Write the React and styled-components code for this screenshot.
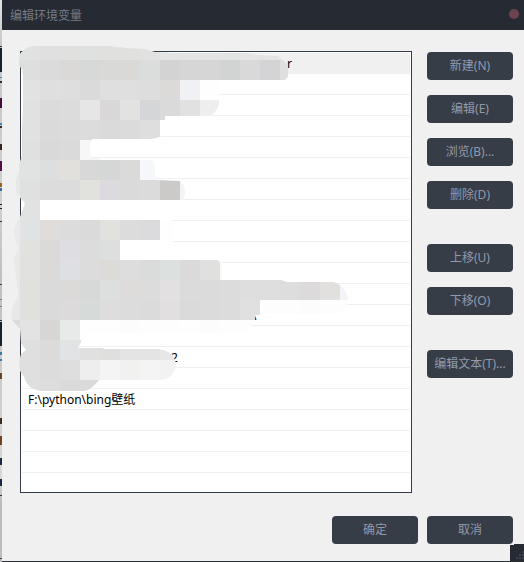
import React from "react";
import styled, { createGlobalStyle } from "styled-components";

const GlobalStyle = createGlobalStyle`
  * { box-sizing: border-box; }
  body { margin: 0; background: #c6c6c6; font-family: "Noto Sans", "Noto Sans CJK SC", sans-serif; font-size: 12px; }
`;

const Desktop = styled.div`
  display: flex;
  min-height: 100vh;
`;

const WindowEdge = styled.div`
  flex: 0 0 2px;
  background: ${(p) => p.$paint};
`;

const Dialog = styled.main`
  position: relative;
  flex: 1;
  min-width: 0;
  display: flex;
  flex-direction: column;
  background: #f0f0f0;
  border-bottom: 1px solid #2b2f34;
`;

const TitleBar = styled.header`
  display: flex;
  align-items: center;
  justify-content: space-between;
  height: 30px;
  padding: 2px 5px 0 8px;
  background: #262a33;
`;

const Title = styled.h1`
  margin: 0;
  font-size: 12px;
  line-height: 20px;
  font-weight: 400;
  color: #777b82;
`;

const CloseButton = styled.button`
  width: 10px;
  height: 10px;
  margin-bottom: 4px;
  padding: 0;
  border: 0;
  border-radius: 50%;
  background: #6c4450;
`;

const Content = styled.div`
  display: grid;
  grid-template-columns: minmax(0, 1fr) 86px;
  column-gap: 15px;
  padding: 21px 11px 0 18px;
`;

const ListArea = styled.div`
  position: relative;
`;

const PathList = styled.ul`
  margin: 0;
  padding: 1px;
  list-style: none;
  background: #fff;
  border: 1px solid #343c48;
`;

const PathRow = styled.li`
  height: 21px;
  padding-left: ${(p) => p.$indent || 6}px;
  line-height: 22px;
  white-space: pre;
  color: #000;
  background: ${(p) => (p.$selected ? "#f0f0f0" : "#fff")};
  border-bottom: 1px solid #f0f0f0;
  &:last-child { height: 18px; border-bottom: 0; }
`;

const Mosaic = styled.svg`
  position: absolute;
  left: -10px;
  top: -11px;
  pointer-events: none;
`;

const Actions = styled.div`
  display: flex;
  flex-direction: column;
  gap: 35px;
  padding-top: 1px;
`;

const ActionGroup = styled.div`
  display: flex;
  flex-direction: column;
  gap: 15px;
`;

const Button = styled.button`
  width: 86px;
  height: 28px;
  padding: 0;
  border: 0;
  border-radius: 4px;
  background: #363d47;
  color: #9299ab;
  font: inherit;
  line-height: 20px;
  white-space: nowrap;
`;

const Footer = styled.footer`
  display: flex;
  justify-content: flex-end;
  gap: 9px;
  padding: 23px 11px 17px;
`;

const Grip = styled.svg`
  position: absolute;
  right: 0;
  bottom: 0;
`;

const rows = Array.from({ length: 21 }, () => ({ text: "" }));
rows[0] = { text: "r", indent: 265, selected: true };
rows[12] = { text: "\\", indent: 230 };
rows[14] = { text: "2", indent: 149 };
rows[16] = { text: "F:\\python\\bing壁纸" };

// [top, colours of successive 20px cells starting at x = 0]
const cells = [
  [40, "e4e5e4 dfe2e1 dfe0df e0e0df dfe1e0 e0e1df e0e1df e1e1e1 e4e4e6 e4e4e4 e4e4e4 e2e3e3 e4e4e4 e4e4e5 e6e6e6"],
  [60, "dcdfde dcdfde dadbda dad9d7 d6d9d8 d9dad8 dad9d6 dbdcdc d3d3d3 d6d6d6 d6d6d6 d2d3d3 d9d9da d4d4d6 dedfdf"],
  [80, "e1e2e2 e1e2e2 dfdfdf dedede d9dad9 dfdfdf dfdfdf dddddd dcdad8 eff1f5 fefefe"],
  [100, "e1e1e1 e1e1e1 dbdbdb dcdcdc e6e6e6 d9d7d8 e2e3e1 d4d6d8 dadada e1e1e1 eeeeee"],
  [120, "e0e1e1 e0e1e1 dadada dbdbdb dcdcdc dadada dbdbdb dedede ffffff"],
  [140, "dfe1e1 dfe1e1 d9d9d9 dadada f7f7f7 ffffff ffffff ffffff"],
  [160, "e5e6e5 e0e3e2 dcdfde e2e0dd d7d8d7 d5d7d6 dadada f6f7fa"],
  [180, "e8e8e6 dfe1e0 dcdcdc dcdcdc e1e1de dcdadf dadada dbdbdb cccac8 f3f3f3"],
  [200, "e8e9e8 e0e3e2 ffffff ffffff ffffff ffffff ffffff ffffff ffffff"],
  [220, "e8e9e8 e0e3e3 dfdcda dcdcdd dadada e1e1de dcdcdd dbdbde fefefe"],
  [240, "e8e9e8 e1e1de dbdad8 dedee2 dcdcdc dddede ffffff ffffff ffffff"],
  [260, "e9e9e8 e1e1df dcdad8 dedfe3 dcdcdd dcdbd8 dddddd dadbdb dce0de dadada e0e0de f9f9f9"],
  [280, "e8e8e8 e0e0dd dadada dcdad8 d6d9d8 dddede dddcda dcdcdc e2e0e1 dbdbdb dbdbdb dcdcdc dedede dedede dddddd dcdadb e1e0de f3f4f7"],
  [300, "e8e8e8 e0e0dd dadada dcdada d6dad8 dddddd dcdcdc dbdbdb e2dfe1 dadada dbdbdb dcdcdc e0e0e0 fdfdfd fdfdfd fcfcfc fdfdfd fdfdfd"],
  [320, "dadcdc e3e3e3 d8d6d4 e8eae9 fefefe fefefe fcfcfc fdfdfd fdfdfd fefefe fcfcfc fdfdfd fdfdfd"],
  [340, "dfdfdf dfdfdf dddbd9 e2e3e5 e0e0e0 dfdfdd e4e4e4 e4e4e4 e7e7e7"],
  [360, "dfdfdf dfdfdf dcdcdc dedede eeeeee f4f4f4 f1f1ef f4f4f4 f2f2f2"],
  [380, "dfdfdf dfdfdf dddddd dadada dadada"],
];

const outline =
  "M33 46H110L126 48L145 49L155 52L180 53H246L258 55L278 56L285 62L288 67V77L285 80L260 85L219 88V104Q216 113 210 116H165V134Q160 138 150 139H92L90 144L91 158H140L152 160L155 165V175L157 180L180 181Q185 184 185 194L183 200H172V218Q174 230 173 244V259H216Q223 262 223 275L222 280H281L287 282H334Q347 287 348 300Q346 311 334 314H260V315H255V319Q252 330 242 333H82L81 342L78 348H103L104 349H158Q175 351 176 365Q173 380 160 380H99Q92 389 85 391H40Q27 389 24 377L20 371L19 362L21 354L26 350L21 343L20 329L12 320Q10 306 18 298Q18 284 15 271L14 258L19 248Q13 238 14 228L20 217L25 203L22 200L16 193V180L19 172V165L22 155V130L23 110V70L19 66V55Q25 47 33 46Z";

const edgeMarks = [
  [46, 47, "#303640"], [48, 72, "#18202c"], [77, 78, "#438bbd"], [81, 83, "#3d2b1a"],
  [98, 108, "#43103c"], [123, 125, "#3f86b5"], [126, 128, "#3a261b"], [144, 150, "#352820"],
  [161, 171, "#570c42"], [183, 187, "#976320"], [188, 191, "#3b6f9f"], [204, 205, "#222222"],
  [208, 209, "#222222"], [221, 222, "#333333"], [284, 285, "#354056"], [299, 300, "#8e75a8"],
  [306, 307, "#8e75a8"], [320, 321, "#222832"], [322, 346, "#18202c"], [352, 355, "#3c7ba5"],
  [359, 361, "#3c7ba5"], [373, 379, "#6e431b"], [418, 424, "#3e2a20"], [436, 445, "#74421c"],
  [458, 465, "#172a43"], [479, 486, "#172a43"], [495, 496, "#333333"], [558, 559, "#444444"],
];

const edgePaint = `linear-gradient(${edgeMarks
  .map(([a, b, c]) => `transparent ${a}px, ${c} ${a}px, ${c} ${b}px, transparent ${b}px`)
  .join(", ")}), linear-gradient(#e2e2e2, #c6c6c6 46px, #d0d0d0 200px, #c0c0c0 280px, #d8d8d8 480px, #bdbdbd 500px)`;

const gripDots = [[12, 7], [9, 10], [12, 10], [6, 13], [9, 13], [12, 13]];

export default function App() {
  return (
    <>
      <GlobalStyle />
      <Desktop>
        <WindowEdge $paint={edgePaint} />
        <Dialog>
          <TitleBar>
            <Title>编辑环境变量</Title>
            <CloseButton aria-label="关闭" />
          </TitleBar>
          <Content>
            <ListArea>
              <PathList>
                {rows.map((row, i) => (
                  <PathRow key={i} $indent={row.indent} $selected={row.selected}>{row.text}</PathRow>
                ))}
              </PathList>
              <Mosaic width="350" height="360" viewBox="10 40 350 360" shapeRendering="crispEdges" aria-hidden="true">
                <clipPath id="smudge"><path d={outline} /></clipPath>
                <g clipPath="url(#smudge)">
                  {cells.map(([y, colors]) =>
                    colors.split(" ").map((c, i) => (
                      <rect key={`${y}-${i}`} x={i * 20} y={y} width="20" height="20" fill={`#${c}`} />
                    ))
                  )}
                </g>
              </Mosaic>
            </ListArea>
            <Actions>
              <ActionGroup>
                <Button>新建(N)</Button>
                <Button>编辑(E)</Button>
                <Button>浏览(B)...</Button>
                <Button>删除(D)</Button>
              </ActionGroup>
              <ActionGroup>
                <Button>上移(U)</Button>
                <Button>下移(O)</Button>
              </ActionGroup>
              <Button>编辑文本(T)...</Button>
            </Actions>
          </Content>
          <Footer>
            <Button>确定</Button>
            <Button>取消</Button>
          </Footer>
          <Grip width="14" height="17" viewBox="0 0 14 17" shapeRendering="crispEdges" aria-hidden="true">
            <path d="M0 1H4V0H14V17H0Z" fill="#262a33" />
            {gripDots.map(([x, y]) => (
              <rect key={`${x}-${y}`} x={x} y={y} width="2" height="2" fill="#3b404a" />
            ))}
          </Grip>
        </Dialog>
      </Desktop>
    </>
  );
}
